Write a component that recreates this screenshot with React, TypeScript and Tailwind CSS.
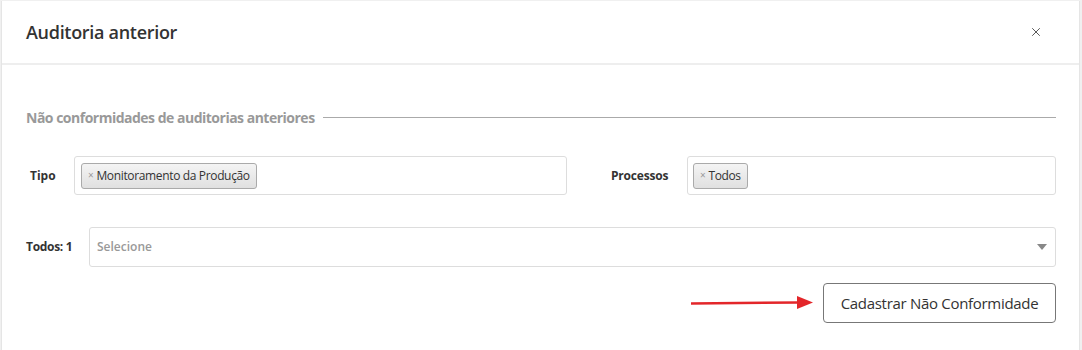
import { X } from "lucide-react";

function Tag({ label }: { label: string }) {
  return (
    <span className="inline-flex h-[26px] items-center gap-[3px] rounded-[3px] border border-[#aaaaaa] bg-gradient-to-b from-[#f4f4f4] to-[#e0e0e0] px-[6px] text-[12px] tracking-[-0.35px] text-[#333]">
      <span className="text-[10px] text-[#999]">×</span>
      {label}
    </span>
  );
}

export default function App() {
  return (
    <div className="h-[350px] w-[1082px] bg-[#f0f0f0] pl-[1px] pt-[1px] pr-[2px] font-['Open_Sans',sans-serif]">
      <div className="h-full border-l border-r border-[#e5e5e5] bg-white">
        <header className="flex h-[64px] items-center justify-between border-b-2 border-[#eeeeee] pl-[24px] pr-[36px]">
          <h1 className="text-[18px] font-semibold tracking-[-0.3px] text-[#333]">Auditoria anterior</h1>
          <X size={14} strokeWidth={1.4} className="text-[#333]" />
        </header>

        <div className="pl-[24px] pr-[23px] pt-[42px]">
          <div className="flex items-center gap-[8px]">
            <span className="text-[14px] font-bold tracking-[-0.5px] text-[#999]">
              Não conformidades de auditorias anteriores
            </span>
            <span className="h-px flex-1 bg-[#aaaaaa]" />
          </div>

          <div className="mt-[28px] flex items-center">
            <span className="w-[48px] pl-[4px] text-[12px] font-bold text-[#333]">Tipo</span>
            <div className="flex h-[39px] w-[493px] items-center rounded-[3px] border border-[#dddddd] px-[6px]">
              <Tag label="Monitoramento da Produção" />
            </div>
            <span className="ml-[44px] w-[76px] text-[12px] font-bold tracking-[-0.2px] text-[#333]">Processos</span>
            <div className="flex h-[39px] flex-1 items-center rounded-[3px] border border-[#dddddd] px-[5px]">
              <Tag label="Todos" />
            </div>
          </div>

          <div className="mt-[32px] flex items-center">
            <span className="w-[63px] text-[12px] font-bold tracking-[-0.3px] text-[#333]">Todos: 1</span>
            <div className="flex h-[40px] flex-1 items-center justify-between rounded-[3px] border border-[#dddddd] pl-[7px] pr-[8px]">
              <span className="text-[12px] font-semibold text-[#999]">Selecione</span>
              <svg width="10" height="6" viewBox="0 0 10 6">
                <path d="M0 0h10L5 6z" fill="#888" />
              </svg>
            </div>
          </div>

          <div className="mt-[16px] flex items-center justify-end gap-[10px]">
            <svg width="122" height="14" viewBox="0 0 122 14">
              <path d="M0 7.5L108 6.5" stroke="#e3262a" strokeWidth="2.5" />
              <path d="M106 0L122 6.5L106 13z" fill="#e3262a" />
            </svg>
            <button className="flex h-[40px] w-[233px] items-center justify-center rounded-[4px] border border-[#777] text-[15px] tracking-[-0.3px] text-[#333]">
              Cadastrar Não Conformidade
            </button>
          </div>
        </div>
      </div>
    </div>
  );
}
